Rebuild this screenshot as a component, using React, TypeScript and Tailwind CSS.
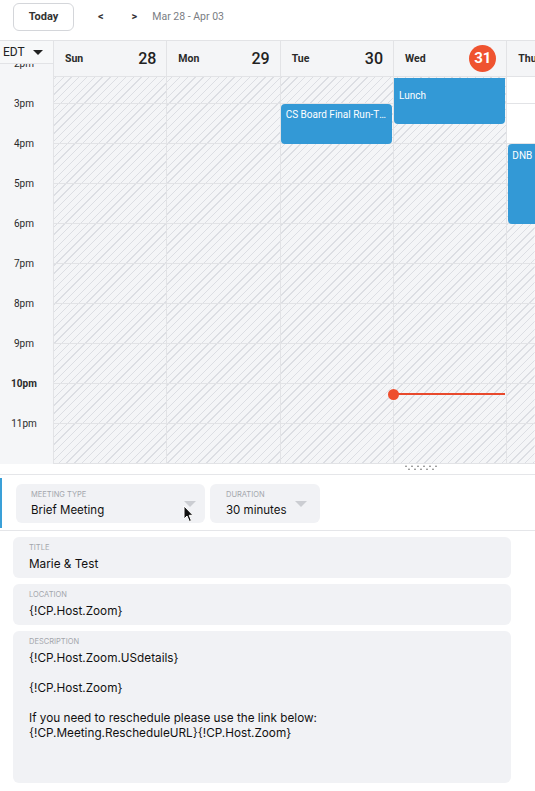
import React from 'react';

const HOURS = ['2pm', '3pm', '4pm', '5pm', '6pm', '7pm', '8pm', '9pm', '10pm', '11pm'];

const DAYS = [
  { name: 'Sun', num: '28' },
  { name: 'Mon', num: '29' },
  { name: 'Tue', num: '30' },
  { name: 'Wed', num: '31', today: true },
  { name: 'Thu', num: '1' },
];

const HATCH =
  'bg-[repeating-linear-gradient(135deg,#dcdee3_0px,#dcdee3_1px,#f4f5f7_1px,#f4f5f7_5.5px)] bg-fixed';

// Thursday is still open early in the afternoon
function isOpen(day: number, hour: number) {
  if (day === 4) return hour < 2;
  return false;
}

function Caret({ className }: { className?: string }) {
  return (
    <svg width="12" height="6" viewBox="0 0 12 6" className={className}>
      <path d="M0 0 L12 0 L6 6 Z" fill="#cbcdd2" />
    </svg>
  );
}

function TopBar() {
  return (
    <div className="h-[40px] flex items-start pt-[3px] pl-[13px]">
      <div className="flex items-center h-[28px]">
        <button className="h-[28px] w-[61px] rounded-[6px] border border-[#d4d6da] bg-white text-[11px] font-bold text-[#333]">
          Today
        </button>
        <span className="ml-[24px] text-[11px] font-bold text-[#333]">&lt;</span>
        <span className="ml-[28px] text-[11px] font-bold text-[#333]">&gt;</span>
        <span className="ml-[15px] text-[10.5px] text-[#7a7d83]">Mar 28 - Apr 03</span>
      </div>
    </div>
  );
}

function DayColumn({ index }: { index: number }) {
  return (
    <div className="relative w-[113.33px] shrink-0 border-r border-[#e2e3e6]">
      {HOURS.map((h, i) => (
        <div
          key={h}
          className={`h-[40px] border-b border-[#e2e3e6] ${isOpen(index, i) ? 'bg-white' : HATCH}`}
        />
      ))}

      {index === 2 && (
        <div className="absolute left-0 right-[1px] top-[40px] h-[40px] rounded-[4px] bg-[#3399d6] px-[5px] pt-[5px] text-[10px] leading-[12px] text-white truncate">
          CS Board Final Run-Through
        </div>
      )}

      {index === 3 && (
        <>
          <div className="absolute left-0 right-[1px] top-[14px] h-[46px] rounded-b-[4px] bg-[#3399d6] px-[5px] pt-[12px] text-[10px] leading-[12px] text-white truncate">
            Lunch
          </div>
          <div className="absolute left-0 right-[1px] top-[329px] h-[2px] bg-[#e8492c]" />
          <div className="absolute left-[-6px] top-[324.5px] w-[11px] h-[11px] rounded-full bg-[#ee4e2e]" />
        </>
      )}

      {index === 4 && (
        <div className="absolute left-[1px] right-[1px] top-[80px] h-[80px] rounded-[4px] bg-[#3399d6] px-[4px] pt-[6px] text-[10px] leading-[12px] text-white">
          DNB
        </div>
      )}
    </div>
  );
}

function Calendar() {
  return (
    <div className="flex h-[424px] border-t border-[#e2e3e6] overflow-hidden">
      {/* time gutter */}
      <div className="w-[54px] shrink-0 bg-[#f5f6f8] border-r border-[#e2e3e6] flex flex-col">
        <div className="relative z-10 h-[23px] shrink-0 bg-[#f7f8f9] border-b border-[#e2e3e6] flex items-center pl-[3px] gap-[8px]">
          <span className="text-[12px] text-[#222]">EDT</span>
          <svg width="10" height="5" viewBox="0 0 10 5">
            <path d="M0 0 L10 0 L5 5 Z" fill="#222" />
          </svg>
        </div>
        {HOURS.map((h) => (
          <div key={h} className="h-[40px] shrink-0 flex items-start justify-center pr-[5px]">
            <span
              className={`-translate-y-1/2 text-[10px] leading-[12px] text-[#2a2a2a] ${
                h === '10pm' ? 'font-bold' : ''
              }`}
            >
              {h}
            </span>
          </div>
        ))}
      </div>

      <div className="flex-1 min-w-0 flex flex-col overflow-hidden">
        {/* day headers */}
        <div className="flex h-[36px] shrink-0 border-b border-[#e2e3e6] bg-[#f4f5f7]">
          {DAYS.map((d) => (
            <div
              key={d.name}
              className="w-[113.33px] shrink-0 border-r border-[#e2e3e6] flex items-center justify-between pl-[11px] pr-[10px]"
            >
              <span className="text-[10.5px] font-bold text-[#2a2a2a]">{d.name}</span>
              {d.today ? (
                <span className="w-[27px] h-[27px] rounded-full bg-[#ef5330] flex items-center justify-center text-[15px] font-bold text-white">
                  {d.num}
                </span>
              ) : (
                <span className="text-[16px] font-medium text-[#222]">{d.num}</span>
              )}
            </div>
          ))}
        </div>

        {/* hour grid */}
        <div className="flex-1 overflow-hidden">
          <div className="flex mt-[-13px]">
            {DAYS.map((d, i) => (
              <DayColumn key={d.name} index={i} />
            ))}
          </div>
        </div>
      </div>
    </div>
  );
}

function Field({
  label,
  children,
  className = '',
}: {
  label: string;
  children: React.ReactNode;
  className?: string;
}) {
  return (
    <div className={`rounded-[6px] bg-[#f1f2f5] pl-[16px] pr-[10px] pt-[6px] ${className}`}>
      <div className="text-[7.5px] leading-[10px] uppercase text-[#a3a6ac]">{label}</div>
      <div className="mt-[4px] text-[11.75px] leading-[15px] text-[#111]">{children}</div>
    </div>
  );
}

function Form() {
  return (
    <div className="font-['Inter',sans-serif]">
      {/* resize handle */}
      <div className="h-[11px] border-b border-[#e5e6e9] flex items-start pl-[405px] pt-[1px]">
        <svg width="32" height="6" viewBox="0 0 32 6">
          {[1, 7, 13, 19, 25, 31].map((x) => (
            <circle key={x} cx={x} cy="1.3" r="0.8" fill="#666" />
          ))}
          {[4, 10, 16, 22, 28].map((x) => (
            <circle key={x} cx={x} cy="4.3" r="0.8" fill="#666" />
          ))}
        </svg>
      </div>

      <div className="pt-[3px] pb-[2px] border-b border-[#e5e6e9]">
        <div className="h-[50px] border-l-[2px] border-[#3aa0d8] flex items-center pl-[14px] gap-[5px]">
          <div className="relative w-[189px] h-[39px] rounded-[6px] bg-[#f1f2f5] flex justify-between pl-[15px] pr-[9px] pt-[6px]">
            <div>
              <div className="text-[7.5px] leading-[10px] uppercase text-[#a3a6ac]">Meeting Type</div>
              <div className="mt-[3px] text-[11.5px] leading-[15px] text-[#111]">Brief Meeting</div>
            </div>
            <Caret className="mt-[11px]" />
            <svg
              width="11"
              height="18"
              viewBox="0 0 11 18"
              className="absolute left-[167px] top-[21px]"
            >
              <path
                d="M1 1 L1 14 L4 11 L6.3 16.5 L8.4 15.6 L6.2 10.3 L10 10.3 Z"
                fill="#111"
                stroke="#fff"
                strokeWidth="1"
                strokeLinejoin="round"
              />
            </svg>
          </div>
          <div className="w-[110px] h-[39px] rounded-[6px] bg-[#f1f2f5] flex justify-between pl-[16px] pr-[13px] pt-[6px]">
            <div>
              <div className="text-[7.5px] leading-[10px] uppercase text-[#a3a6ac]">Duration</div>
              <div className="mt-[3px] text-[11.5px] leading-[15px] text-[#111]">30 minutes</div>
            </div>
            <Caret className="mt-[11px]" />
          </div>
        </div>
      </div>

      <div className="flex flex-col gap-[6px] pt-[6px] pl-[13px] pr-[24px]">
        <Field label="Title" className="h-[41px]">
          Marie &amp; Test
        </Field>
        <Field label="Location" className="h-[41px]">
          {'{!CP.Host.Zoom}'}
        </Field>
        <Field label="Description" className="h-[152px]">
          <div>{'{!CP.Host.Zoom.USdetails}'}</div>
          <div>&nbsp;</div>
          <div>{'{!CP.Host.Zoom}'}</div>
          <div>&nbsp;</div>
          <div>If you need to reschedule please use the link below:</div>
          <div>{'{!CP.Meeting.RescheduleURL}{!CP.Host.Zoom}'}</div>
        </Field>
      </div>
    </div>
  );
}

export default function App() {
  return (
    <div className="w-[535px] h-[791px] overflow-hidden bg-white font-['Roboto',sans-serif]">
      <TopBar />
      <Calendar />
      <Form />
    </div>
  );
}
